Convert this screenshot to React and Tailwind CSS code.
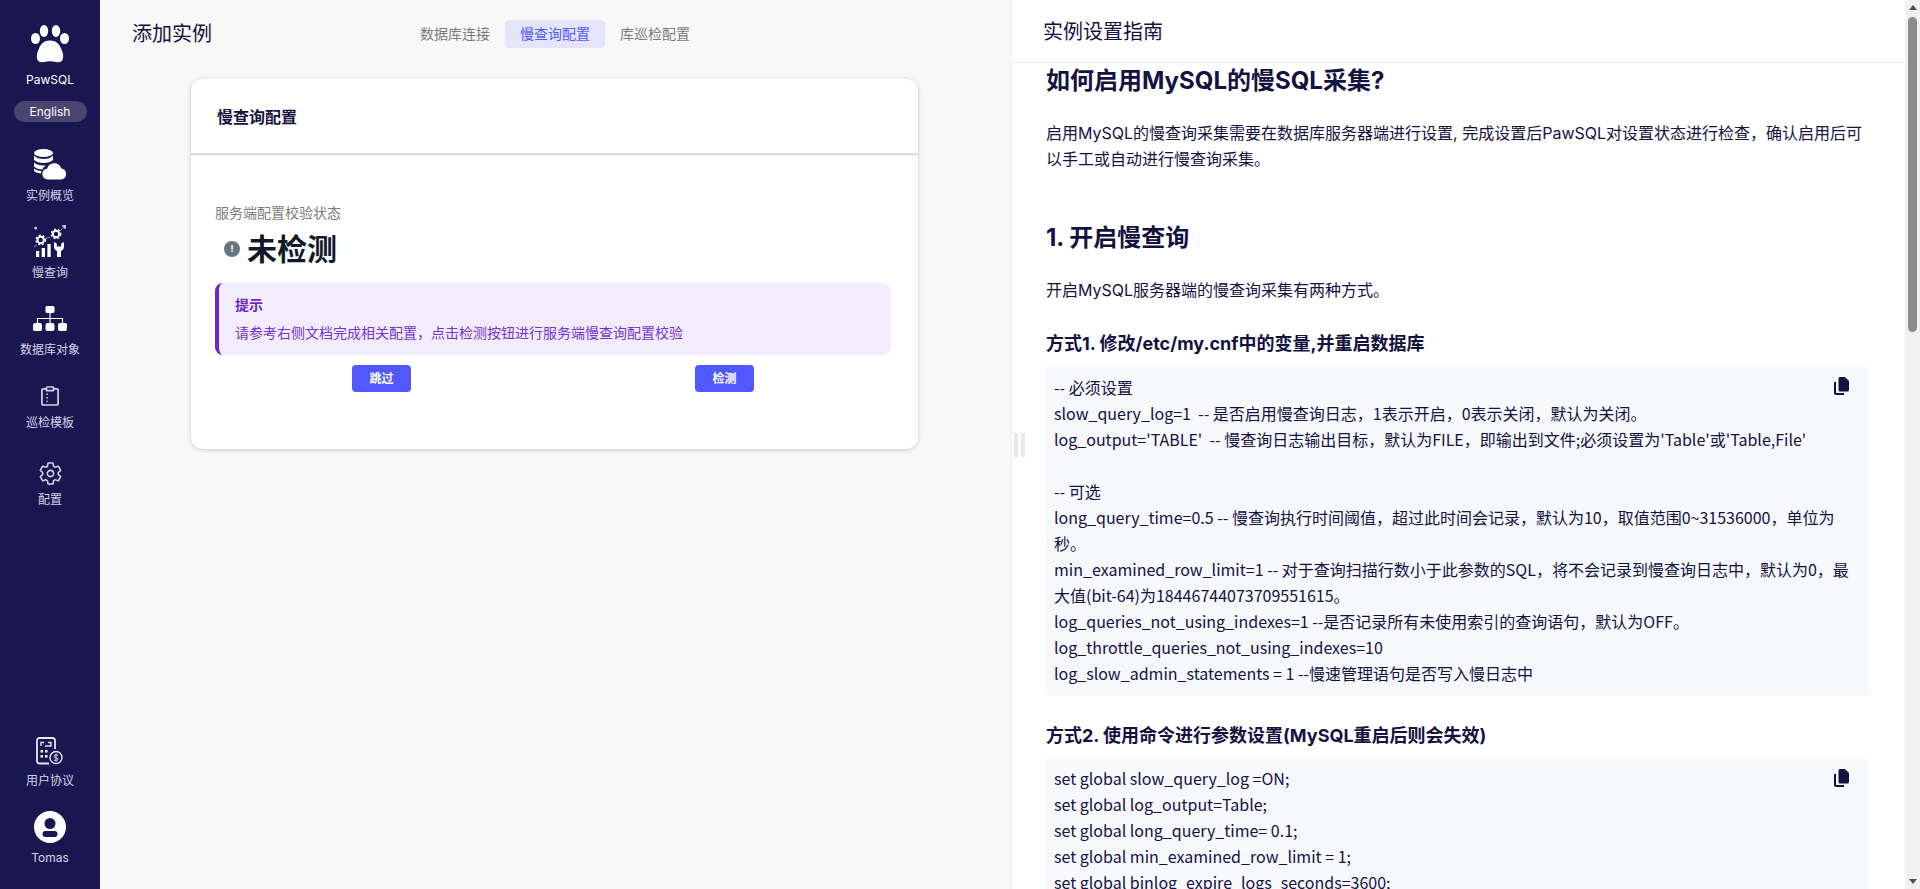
import { useState } from "react";
import { IoSettingsOutline } from "react-icons/io5";

const cjk = "font-['Inter','Noto_Sans_CJK_SC',sans-serif]";

const PawIcon = () => (
  <svg width="38" height="38" viewBox="0 0 38 38" fill="white">
    <ellipse cx="4.5" cy="13.5" rx="4.5" ry="5.5" />
    <ellipse cx="13" cy="6" rx="4.2" ry="6" />
    <ellipse cx="25" cy="6" rx="4.2" ry="6" />
    <ellipse cx="33.5" cy="13.5" rx="4.5" ry="5.5" />
    <path d="M19 15.5c6 0 9 3 11 8 2 4 3 8 1.500 11.500-1 2-4 2.500-6.500 2-4-1-8-1-12 0-2.500.5-5.500 0-6.500-2C5 31.500 6 27.500 8 23.500c2-5 5-8 11-8z" />
  </svg>
);

const DbCloudIcon = () => (
  <svg width="34" height="34" viewBox="0 0 34 34" fill="white">
    <ellipse cx="10.5" cy="6" rx="9.5" ry="4" />
    <path d="M1 8.500c2 2.500 5.500 3.500 9.500 3.500s7.500-1 9.500-3.500V13c-2 2-5.500 3-9.500 3S3 15 1 13z" />
    <path d="M1 15.500c2 2 5.500 3 9.500 3 1 0 2 0 3-.2-2 1-3.500 2.500-4 4.200-3.500 0-7-1-8.500-3z" />
    <path d="M1 21.500c2 1.500 4.500 2.300 7.500 2.500-.3 1-.3 2 0 2.500-3.500-.2-6-1-7.500-2.500z" />
    <path d="M14.500 33a6 6 0 0 1-.8-11.900 8 8 0 0 1 15-.3A6.200 6.200 0 0 1 28.500 33z" stroke="#1a1650" strokeWidth="1.2" />
  </svg>
);

const SlowIcon = () => (
  <svg width="34" height="34" viewBox="0 0 34 34" fill="white">
    <circle cx="2.7" cy="3" r="1.5" opacity="0.75" />
    <path d="M33 0l-4.500.5 4 4z" opacity="0.85" />
    <path d="M30 3l-3.500 3.500M4 20l-3 2M17 12l-4 1.500" stroke="white" strokeWidth="0.8" opacity="0.7" />
    <circle cx="7.7" cy="15" r="3.2" fill="none" stroke="white" strokeWidth="2" />
    <circle cx="7.7" cy="15" r="4.8" fill="none" stroke="white" strokeWidth="1.2" strokeDasharray="2 2" />
    <circle cx="23" cy="9" r="3.2" fill="none" stroke="white" strokeWidth="2" />
    <circle cx="23" cy="9" r="4.8" fill="none" stroke="white" strokeWidth="1.2" strokeDasharray="2 2" />
    <rect x="3" y="26" width="3.2" height="6" />
    <rect x="8.7" y="23" width="3.3" height="9" />
    <rect x="14.4" y="19" width="3.3" height="13" />
    <path d="M21 17v5c0 2 2 3.500 3 4v6h4v-6c1-.5 3-2 3-4v-5l-2.800 1.500v3h-4.400v-3z" />
  </svg>
);

const TreeIcon = () => (
  <svg width="34" height="26" viewBox="0 0 34 26" fill="white">
    <rect x="12.5" y="0" width="9" height="7" rx="1.5" />
    <rect x="0" y="17" width="9" height="8" rx="2" />
    <rect x="12.5" y="17" width="9" height="8" rx="2" />
    <rect x="25" y="17" width="9" height="8" rx="2" />
    <path d="M17 7v10M4.500 17v-4.500h25V17" fill="none" stroke="white" strokeWidth="1.2" />
  </svg>
);

const TemplateIcon = () => (
  <svg width="18" height="20" viewBox="0 0 20 22" fill="none" stroke="#d5d3e8" strokeWidth="1.9">
    <path d="M6 3H2.500A1.500 1.500 0 0 0 1 4.500v15A1.500 1.500 0 0 0 2.500 21h15a1.500 1.500 0 0 0 1.500-1.500v-15A1.500 1.500 0 0 0 17.500 3H14" />
    <rect x="6" y="1" width="8" height="4" rx="0.8" />
    <path d="M6 9h1.600M6 13h1.600M6 17h1.600" strokeWidth="1.6" />
  </svg>
);

const AgreementIcon = () => (
  <svg width="27" height="28" viewBox="0 0 27 28" fill="none" stroke="#e6e5f2" strokeWidth="1.8">
    <path d="M13 26.500H3.500A2.500 2.500 0 0 1 1 24V3.500A2.500 2.500 0 0 1 3.500 1h13A2.500 2.500 0 0 1 19 3.500V12" />
    <path d="M5 9V5.500h3M12 5.500h3V9h-6" strokeWidth="1.4" />
    <g fill="#e6e5f2" stroke="none">
      <rect x="4.5" y="13" width="2.6" height="2.6" />
      <rect x="9" y="13" width="2.6" height="2.6" />
      <rect x="4.5" y="18" width="2.6" height="2.6" />
      <rect x="9" y="18" width="2.6" height="2.6" />
    </g>
    <circle cx="20" cy="20.5" r="6" strokeWidth="1.4" />
    <path d="M22 18.500c-1-1-4-1-4 .8 0 2 4 1 4 3 0 1.500-3 1.500-4 .6M20 16.500v8" strokeWidth="1" />
  </svg>
);

const AvatarIcon = () => (
  <svg width="32" height="32" viewBox="0 0 32 32">
    <circle cx="16" cy="16" r="16" fill="white" />
    <circle cx="16" cy="12.5" r="5.5" fill="#1a1650" />
    <rect x="8.500" y="20" width="15" height="6" rx="3" fill="#1a1650" />
  </svg>
);

const CopyIcon = () => (
  <svg width="15" height="18" viewBox="0 0 15 18" fill="#14123f">
    <path d="M6 0h5l4 4v9a1.500 1.500 0 0 1-1.500 1.500H6A1.500 1.500 0 0 1 4.500 13V1.500A1.500 1.500 0 0 1 6 0z" />
    <path d="M0 5h2v10.500c0 .3.200.5.500.5H10v2H2a2 2 0 0 1-2-2z" />
  </svg>
);

const navItems = [
  { label: "实例概览", icon: <DbCloudIcon />, box: "h-[77px] pt-[2px]", gap: "mt-[6px]" },
  { label: "慢查询", icon: <SlowIcon />, box: "h-[77px] pt-[3px]", gap: "mt-[5px]" },
  { label: "数据库对象", icon: <TreeIcon />, box: "h-[73px] pt-[3px]", gap: "mt-[5px]" },
  { label: "巡检模板", icon: <TemplateIcon />, box: "h-[77px] pt-[7px]", gap: "mt-[1px]" },
  { label: "配置", icon: <IoSettingsOutline size={25} />, box: "h-[77px] pt-[7px]", gap: "mt-[1px]" },
];

const Sidebar = () => (
  <aside className="w-[100px] h-full shrink-0 bg-[#1a1650] flex flex-col items-center text-[#d5d3e8] text-xs">
    <div className="pt-[25px]">
      <PawIcon />
    </div>
    <div className="mt-[9px] text-white leading-4">PawSQL</div>
    <div className="mt-[13px] w-[73px] h-[21px] rounded-full bg-[#4a4570] text-white flex items-center justify-center">
      English
    </div>
    <nav className="mt-[22px] w-full flex flex-col">
      {navItems.map((item) => (
        <a key={item.label} className={`flex flex-col items-center ${item.box}`}>
          <div className="h-[36px] flex items-center justify-center">{item.icon}</div>
          <span className={`${item.gap} leading-4`}>{item.label}</span>
        </a>
      ))}
    </nav>
    <div className="mt-auto pb-[23px] flex flex-col items-center">
      <AgreementIcon />
      <span className="mt-[8px] leading-4">用户协议</span>
      <div className="mt-[22px]">
        <AvatarIcon />
      </div>
      <span className="mt-[7px] leading-4">Tomas</span>
    </div>
  </aside>
);

const tabs = ["数据库连接", "慢查询配置", "库巡检配置"];

const LeftPane = () => {
  const [tab, setTab] = useState(1);

  return (
    <main className="w-[911px] h-full shrink-0 bg-[#f8f8f8]">
      <div className="h-[79px] pl-[32px] flex items-start">
        <h1 className="w-[273px] mt-[20px] text-xl leading-7 text-[#14123f]">添加实例</h1>
        <div className="flex mt-[20px] text-sm">
          {tabs.map((t, i) => (
            <button
              key={t}
              onClick={() => setTab(i)}
              className={`h-[28px] px-[15px] rounded ${i === tab ? "bg-[#e5e4fb] text-[#5158ff]" : "text-[#7a7a85]"}`}
            >
              {t}
            </button>
          ))}
        </div>
      </div>
      <div className="ml-[91px] w-[727px] h-[370px] bg-white rounded-xl shadow-[0_1px_5px_rgba(0,0,0,0.18)]">
        <div className="h-[76px] pl-[26px] pt-[1px] flex items-center border-b-2 border-[#dcdcdc] shadow-[0_1px_2px_rgba(0,0,0,0.08)] text-base font-bold text-[#14123f]">
          慢查询配置
        </div>
        <div className="pl-[24px] pr-[27px] pt-[48px]">
          <div className="text-sm leading-5 text-[#7c7c7c]">服务端配置校验状态</div>
          <div className="mt-[6px] h-[40px] pl-[9px] flex items-center gap-[7px]">
            <span className="w-4 h-4 rounded-full bg-[#6b7280] text-white text-[9px] font-bold flex items-center justify-center">
              !
            </span>
            <span className="text-3xl font-bold text-[#111827]">未检测</span>
          </div>
          <div className="mt-[14px] h-[72px] pl-[16px] rounded-lg border-l-4 border-[#6d28c9] bg-[#f3ecfc] flex flex-col justify-center gap-[8px] text-sm leading-5 text-[#7434cf]">
            <div className="font-bold text-[#6d28c9]">提示</div>
            <div>请参考右侧文档完成相关配置，点击检测按钮进行服务端慢查询配置校验</div>
          </div>
          <div className="mt-[10px] px-[137px] flex justify-between">
            <button className="w-[59px] h-[27px] rounded bg-[#5158ff] text-white text-xs font-bold">跳过</button>
            <button className="w-[59px] h-[27px] rounded bg-[#5158ff] text-white text-xs font-bold">检测</button>
          </div>
        </div>
      </div>
    </main>
  );
};

const CodeBlock = ({ lines, className }) => (
  <div className={`relative bg-[#f7f8fc] px-[8px] font-['Noto_Sans_CJK_SC',sans-serif] text-base leading-[26px] text-[#14123f] ${className}`}>
    <div className="absolute right-[20px] top-[10px]">
      <CopyIcon />
    </div>
    {lines.map((line, i) => (
      <div key={i} className="min-h-[26px] whitespace-pre-wrap">
        {line}
      </div>
    ))}
  </div>
);

const code1 = [
  "-- 必须设置",
  "slow_query_log=1  -- 是否启用慢查询日志，1表示开启，0表示关闭，默认为关闭。",
  "log_output='TABLE'  -- 慢查询日志输出目标，默认为FILE，即输出到文件;必须设置为'Table'或'Table,File'",
  "",
  "-- 可选",
  "long_query_time=0.5 -- 慢查询执行时间阈值，超过此时间会记录，默认为10，取值范围0~31536000，单位为秒。",
  "min_examined_row_limit=1 -- 对于查询扫描行数小于此参数的SQL，将不会记录到慢查询日志中，默认为0，最大值(bit-64)为18446744073709551615。",
  "log_queries_not_using_indexes=1 --是否记录所有未使用索引的查询语句，默认为OFF。",
  "log_throttle_queries_not_using_indexes=10",
  "log_slow_admin_statements = 1 --慢速管理语句是否写入慢日志中",
];

const code2 = [
  "set global slow_query_log =ON;",
  "set global log_output=Table;",
  "set global long_query_time= 0.1;",
  "set global min_examined_row_limit = 1;",
  "set global binlog_expire_logs_seconds=3600;",
];

const ScrollBar = () => (
  <div className="w-[15px] h-full shrink-0 bg-[#f1f1f1] flex flex-col items-center">
    <div className="h-[15px] flex items-center justify-center">
      <div className="w-0 h-0 border-x-[4px] border-x-transparent border-b-[5px] border-b-[#505050]" />
    </div>
    <div className="w-[9px] h-[315px] mt-[2px] rounded-full bg-[#8c8c8c]" />
    <div className="mt-auto h-[15px] flex items-center justify-center">
      <div className="w-0 h-0 border-x-[4px] border-x-transparent border-t-[5px] border-t-[#505050]" />
    </div>
  </div>
);

const DocPane = () => (
  <section className="flex-1 min-w-0 h-full bg-white flex border-l border-[#f0f0f0]">
    <div className="relative flex-1 min-w-0 h-full flex flex-col">
      <div className="h-[63px] shrink-0 pl-[31px] pt-[2px] flex items-center border-b border-[#e8e8e8] text-xl text-[#14123f]">
        实例设置指南
      </div>
      <div className="flex-1 min-h-0 overflow-hidden pl-[34px] pr-[36px] text-[#14123f]">
        <h1 className="mt-[2px] text-2xl leading-8 font-bold">如何启用MySQL的慢SQL采集?</h1>
        <p className="mt-[23px] text-base leading-[26px]">
          启用MySQL的慢查询采集需要在数据库服务器端进行设置, 完成设置后PawSQL对设置状态进行检查，确认启用后可以手工或自动进行慢查询采集。
        </p>
        <h2 className="mt-[50px] text-2xl leading-8 font-bold">1. 开启慢查询</h2>
        <p className="mt-[23px] text-base leading-[26px]">开启MySQL服务器端的慢查询采集有两种方式。</p>
        <h3 className="mt-[27px] text-lg leading-7 font-bold">方式1. 修改/etc/my.cnf中的变量,并重启数据库</h3>
        <CodeBlock lines={code1} className="mt-[9px] pt-[7px] pb-[9px]" />
        <h3 className="mt-[27px] text-lg leading-7 font-bold">方式2. 使用命令进行参数设置(MySQL重启后则会失效)</h3>
        <CodeBlock lines={code2} className="mt-[9px] pt-[6px] pb-[9px]" />
      </div>
      <div className="absolute left-[2px] top-[433px] flex gap-[3px]">
        <div className="w-[4px] h-[24px] bg-[#e6e6ee]" />
        <div className="w-[4px] h-[24px] bg-[#e6e6ee]" />
      </div>
    </div>
    <ScrollBar />
  </section>
);

const App = () => (
  <div className={`flex w-full h-[889px] overflow-hidden ${cjk}`}>
    <Sidebar />
    <LeftPane />
    <DocPane />
  </div>
);

export default App;
